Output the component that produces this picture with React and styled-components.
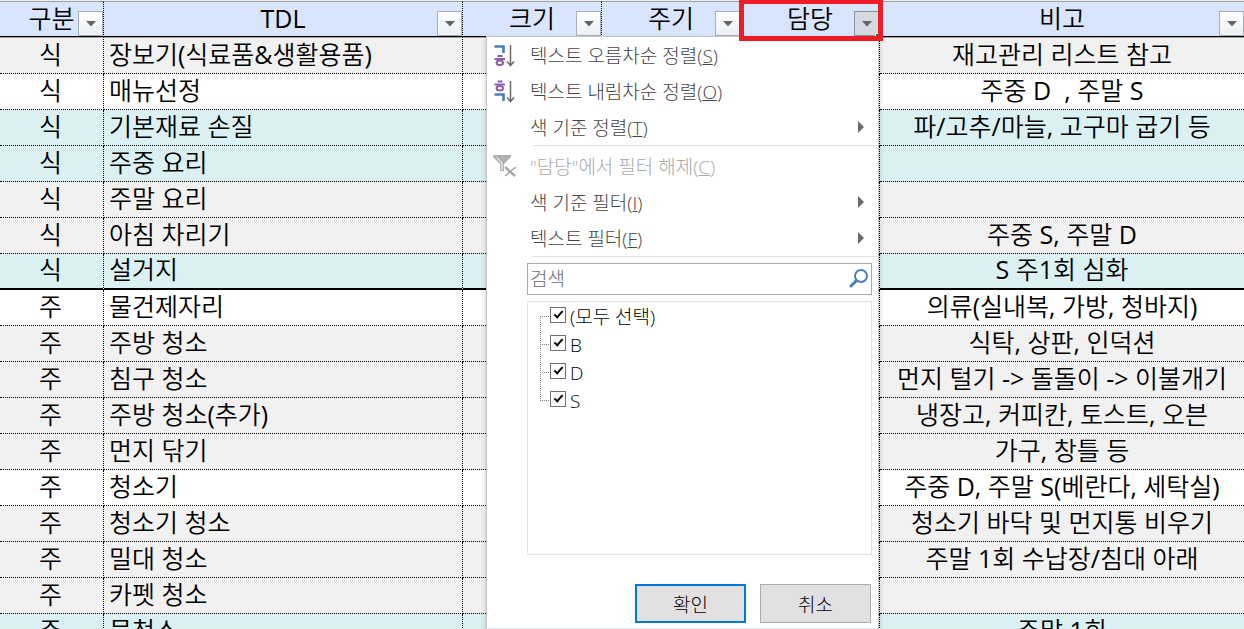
import React from 'react'
import styled, { createGlobalStyle } from 'styled-components'

const columns = [
    { title: '구분', width: '104px' },
    { title: 'TDL', width: '359px' },
    { title: '크기', width: '139px' },
    { title: '주기', width: '139px' },
    { title: '담당', width: '139px', open: true },
    { title: '비고' },
]

const rows = [
    { group: '식', task: '장보기(식료품&생활용품)', note: '재고관리 리스트 참고', tone: 'gray' },
    { group: '식', task: '매뉴선정', note: '주중 D  , 주말 S', tone: 'white' },
    { group: '식', task: '기본재료 손질', note: '파/고추/마늘, 고구마 굽기 등', tone: 'mint' },
    { group: '식', task: '주중 요리', note: '', tone: 'mint' },
    { group: '식', task: '주말 요리', note: '', tone: 'gray' },
    { group: '식', task: '아침 차리기', note: '주중 S, 주말 D', tone: 'gray' },
    { group: '식', task: '설거지', note: 'S 주1회 심화', tone: 'mint', last: true },
    { group: '주', task: '물건제자리', note: '의류(실내복, 가방, 청바지)', tone: 'white' },
    { group: '주', task: '주방 청소', note: '식탁, 상판, 인덕션', tone: 'gray' },
    { group: '주', task: '침구 청소', note: '먼지 털기 -> 돌돌이 -> 이불개기', tone: 'gray' },
    { group: '주', task: '주방 청소(추가)', note: '냉장고, 커피칸, 토스트, 오븐', tone: 'gray' },
    { group: '주', task: '먼지 닦기', note: '가구, 창틀 등', tone: 'gray' },
    { group: '주', task: '청소기', note: '주중 D, 주말 S(베란다, 세탁실)', tone: 'white' },
    { group: '주', task: '청소기 청소', note: '청소기 바닥 및 먼지통 비우기', tone: 'gray' },
    { group: '주', task: '밀대 청소', note: '주말 1회 수납장/침대 아래', tone: 'gray' },
    { group: '주', task: '카펫 청소', note: '', tone: 'gray' },
    { group: '주', task: '물청소', note: '주말 1회', tone: 'mint' },
]

const tones = { gray: '#f1f1f1', white: '#ffffff', mint: '#daf0f3' }

const options = ['(모두 선택)', 'B', 'D', 'S']

function SortIcon({ descending }) {
    return (
        <svg width="24" height="24" viewBox="0 0 24 24" fill="none">
            <path d="M1.5 3.5H10.5V10" stroke="#4a7ebb" strokeWidth="2.6" transform={descending ? 'translate(0 12)' : undefined} />
            <g stroke="#8e5bb0" strokeWidth="2" transform={descending ? 'translate(0 -10.5)' : undefined}>
                <path d="M4.5 13H9.5M1.5 16H12" />
                <ellipse cx="6.8" cy="19.8" rx="3.2" ry="2.2" />
            </g>
            <path d="M17.5 2V22.5M14 18.5L17.5 22.5L21 18.5" stroke="#6b6b6b" strokeWidth="1.5" />
        </svg>
    )
}

function ClearIcon() {
    return (
        <svg width="24" height="24" viewBox="0 0 24 24" fill="none">
            <path d="M0 1H18V3L11 10V17H7V10L0 3Z" fill="#b1b1b1" />
            <path d="M4 3.5L9 9V16" stroke="#fff" strokeWidth="1" />
            <path d="M12 13L22 22" stroke="#a9a9a9" strokeWidth="2.6" />
            <path d="M23 13L12 22" stroke="#a9a9a9" strokeWidth="1.6" />
        </svg>
    )
}

function SearchIcon() {
    return (
        <svg width="20" height="20" viewBox="0 0 20 20" fill="none" stroke="#4a7ebb">
            <circle cx="12" cy="7" r="6" strokeWidth="2" />
            <path d="M7.5 11.5L2 17" strokeWidth="3" strokeLinecap="round" />
        </svg>
    )
}

function MenuItem({ icon, label, accessKey, submenu, disabled }) {
    return (
        <Item type="button" disabled={disabled}>
            <IconSlot>{icon}</IconSlot>
            <span>{label}(<u>{accessKey}</u>)</span>
            {submenu && <SubArrow width="6" height="12" viewBox="0 0 6 12"><path d="M0 0L6 6L0 12Z" fill="#6b6b6b" /></SubArrow>}
        </Item>
    )
}

function FilterMenu() {
    return (
        <Menu>
            <MenuItem icon={<SortIcon />} label="텍스트 오름차순 정렬" accessKey="S" />
            <MenuItem icon={<SortIcon descending />} label="텍스트 내림차순 정렬" accessKey="O" />
            <MenuItem label="색 기준 정렬" accessKey="T" submenu />
            <Separator />
            <MenuItem icon={<ClearIcon />} label={'"담당"에서 필터 해제'} accessKey="C" disabled />
            <MenuItem label="색 기준 필터" accessKey="I" submenu />
            <MenuItem label="텍스트 필터" accessKey="F" submenu />
            <Separator />
            <SearchBox>
                <SearchInput type="text" placeholder="검색" aria-label="검색" />
                <SearchIcon />
            </SearchBox>
            <Tree>
                {options.map(option => (
                    <Option key={option}>
                        <Check type="checkbox" defaultChecked />
                        <OptionText>{option}</OptionText>
                    </Option>
                ))}
            </Tree>
            <Actions>
                <ActionButton type="button" $primary>확인</ActionButton>
                <ActionButton type="button">취소</ActionButton>
            </Actions>
        </Menu>
    )
}

function App() {
    return (
        <Sheet>
            <GlobalStyle />
            <Table>
                <colgroup>
                    {columns.map(col => <Col key={col.title} $width={col.width} />)}
                </colgroup>
                <thead>
                    <tr>
                        {columns.map(col => (
                            <HeadCell key={col.title}>
                                {col.title}
                                <FilterButton type="button" aria-label={`${col.title} 필터`} $open={col.open}>
                                    <svg width="10" height="6" viewBox="0 0 10 6"><path d="M0 0H10L5 5.5Z" fill="#646464" /></svg>
                                </FilterButton>
                                {col.open && <FilterMenu />}
                                {col.open && <Highlight />}
                            </HeadCell>
                        ))}
                    </tr>
                </thead>
                <tbody>
                    {rows.map(row => (
                        <Row key={row.task} $tone={row.tone} $last={row.last}>
                            <Cell>{row.group}</Cell>
                            <Cell $left>{row.task}</Cell>
                            <Cell />
                            <Cell />
                            <Cell />
                            <Cell>{row.note}</Cell>
                        </Row>
                    ))}
                </tbody>
            </Table>
        </Sheet>
    )
}

const GlobalStyle = createGlobalStyle`
    * {
        box-sizing: border-box;
    }
    body {
        margin: 0;
        background: #fff;
        font-family: "Open Sans", "Noto Sans CJK KR", sans-serif;
    }
    button, input {
        font-family: inherit;
    }
`

const Sheet = styled.div`
    height: 100vh;
    padding-top: 1px;
    overflow: hidden;
    background: #f0f0f0;
`

const Table = styled.table`
    width: 100%;
    table-layout: fixed;
    border-collapse: separate;
    border-spacing: 0;
    font-family: "Open Sans", "Noto Sans CJK KR DemiLight", "Noto Sans CJK KR", sans-serif;
    font-size: 25px;
    font-weight: 400;
    line-height: 32px;
    color: #000;
`

const Col = styled.col`
    width: ${props => props.$width || 'auto'};
`

const HeadCell = styled.th`
    position: relative;
    height: 36px;
    padding: 0 0 2px;
    border-top: 1px solid #a0a0a0;
    border-bottom: 1px solid #000;
    border-right: 1px dotted #000;
    background: #d9e5fc;
    font-weight: inherit;

    &:last-child {
        border-right: 0;
    }
`

const FilterButton = styled.button`
    position: absolute;
    right: 0;
    bottom: 0;
    display: flex;
    align-items: center;
    justify-content: center;
    width: 25px;
    height: 25px;
    padding: 0;
    border: 1px solid ${props => props.$open ? '#8e949c' : '#a9afb8'};
    background: ${props => props.$open ? '#d5d9e0' : 'linear-gradient(#ffffff, #eceff3)'};
`

const Highlight = styled.div`
    position: absolute;
    z-index: 3;
    top: -2px;
    left: -2px;
    right: -4px;
    height: 41px;
    border: 5px solid #ee1c24;
    border-top-width: 4px;
    pointer-events: none;

    &::after {
        content: '';
        position: absolute;
        right: 0;
        bottom: 0;
        width: 2px;
        height: 2px;
        border: solid #fff;
        border-width: 1px 0 0 1px;
        background: #217346;
    }
`

const Row = styled.tr`
    background: ${props => tones[props.$tone]};

    td {
        border-bottom: ${props => props.$last ? '2px solid #000' : '1px dotted #000'};
    }
    &:first-child td {
        height: 37px;
        border-top: 1px solid #a0a0a0;
    }
`

const Cell = styled.td`
    height: 36px;
    padding: ${props => props.$left ? '0 0 3px 5px' : '0 2px 3px 0'};
    border-right: 1px dotted #000;
    line-height: 31px;
    text-align: ${props => props.$left ? 'left' : 'center'};
    white-space: pre;

    &:last-child {
        padding-right: 0;
        border-right: 0;
    }
`

const Menu = styled.div`
    position: absolute;
    z-index: 2;
    top: 100%;
    right: 0;
    width: 393px;
    padding: 0 0 5px;
    border: 1px solid #c6c6c6;
    border-bottom-color: #dfe6ee;
    background: #fff;
    box-shadow: 0 3px 6px rgba(0, 0, 0, 0.2);
    font-family: "Open Sans", "Noto Sans CJK KR", sans-serif;
    font-size: 19px;
    font-weight: 300;
    line-height: 28px;
    text-align: left;
`

const Item = styled.button`
    display: flex;
    align-items: center;
    width: 100%;
    height: 36px;
    padding: 0 14px 0 6px;
    border: 0;
    background: none;
    color: ${props => props.disabled ? '#a9a9a9' : '#444'};
    font-size: 19px;
    font-weight: 300;
    text-align: left;
`

const IconSlot = styled.span`
    display: flex;
    width: 37px;
`

const SubArrow = styled.svg`
    margin-left: auto;
`

const Separator = styled.div`
    height: 1px;
    margin: 0 0 2px 45px;
    background: #e2e2e2;
`

const SearchBox = styled.label`
    display: flex;
    align-items: center;
    height: 32px;
    margin: 6px 6px 6px 40px;
    padding: 0 2px;
    border: 1px solid #ababab;
`

const SearchInput = styled.input`
    flex: 1;
    min-width: 0;
    padding: 0;
    border: 0;
    outline: none;
    background: none;
    font-size: 19px;
    font-weight: 300;

    &::placeholder {
        color: #6b6b6b;
    }
`

const Tree = styled.div`
    height: 254px;
    margin: 0 6px 0 40px;
    border: 1px solid #e2e3e5;
`

const Option = styled.label`
    display: flex;
    align-items: center;
    height: 28px;
    margin-left: 12px;
    color: #000;

    &::before {
        content: '';
        align-self: stretch;
        width: 10px;
        background:
            repeating-linear-gradient(90deg, #808080 0 1px, transparent 1px 2px) 0 14px / 100% 1px no-repeat,
            repeating-linear-gradient(#808080 0 1px, transparent 1px 2px) 0 0 / 1px 100% no-repeat;
    }
    &:first-child::before {
        margin-top: 14px;
        background-position: 0 0, 0 0;
    }
    &:last-child::before {
        margin-bottom: 13px;
    }
`

const OptionText = styled.span`
    padding: 2px 0 0 4px;
`

const Check = styled.input`
    appearance: none;
    width: 16px;
    height: 16px;
    margin: 0 0 2px;
    border: 1px solid #707070;
    background: #fff;

    &:checked::before {
        content: '';
        display: block;
        width: 3px;
        height: 7px;
        margin: 1px 0 0 5px;
        border: solid #000;
        border-width: 0 2px 2px 0;
        transform: rotate(42deg);
    }
`

const Actions = styled.div`
    display: flex;
    justify-content: flex-end;
    gap: 14px;
    margin: 29px 7px 0 0;
`

const ActionButton = styled.button`
    width: 111px;
    height: 39px;
    padding: 0;
    border: ${props => props.$primary ? '2px solid #0078d7' : '1px solid #adadad'};
    background: #e1e1e1;
    color: #000;
    font-size: 19px;
    font-weight: 300;
`

export default App
